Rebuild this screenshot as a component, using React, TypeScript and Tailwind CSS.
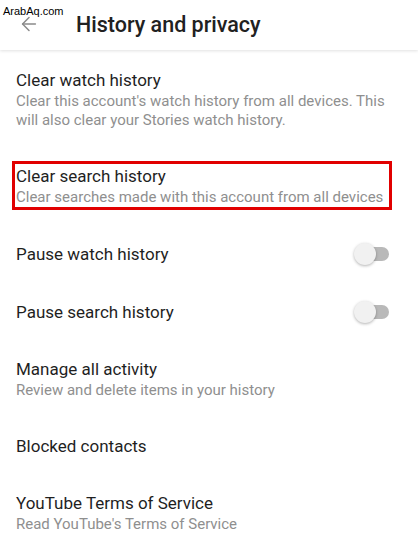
import { ArrowLeft } from "lucide-react";

type Item = {
  title: string;
  sub?: string;
  toggle?: boolean;
  boxed?: boolean;
};

const ITEMS: Item[] = [
  {
    title: "Clear watch history",
    sub: "Clear this account's watch history from all devices. This will also clear your Stories watch history.",
  },
  {
    title: "Clear search history",
    sub: "Clear searches made with this account from all devices",
    boxed: true,
  },
  { title: "Pause watch history", toggle: true },
  { title: "Pause search history", toggle: true },
  { title: "Manage all activity", sub: "Review and delete items in your history" },
  { title: "Blocked contacts" },
  { title: "YouTube Terms of Service", sub: "Read YouTube's Terms of Service" },
];

function Toggle() {
  return (
    <div className="relative mr-[9px] h-[22px] w-[35px] shrink-0">
      <div className="absolute right-0 top-1 h-[14px] w-[26px] rounded-full bg-[#b9b9b9]" />
      <div className="absolute left-0 top-0 size-[22px] rounded-full bg-[#f1f1f1] shadow-[0_1px_3px_rgba(0,0,0,0.3)]" />
    </div>
  );
}

export default function App() {
  return (
    <div
      className="relative h-[548px] w-[418px] overflow-hidden bg-white"
      style={{ fontFamily: "Roboto, 'Noto Sans', sans-serif" }}
    >
      <span
        className="absolute left-[3px] top-[4px] z-10 text-[11px] leading-[14px] text-black"
        style={{ fontFamily: "'Liberation Sans', Arial, sans-serif" }}
      >
        ArabAq.com
      </span>

      <header className="flex h-[50px] items-center shadow-[0_1px_3px_rgba(0,0,0,0.12)]">
        <ArrowLeft className="ml-[18px] mt-[-2px] size-[22px] text-[#8a8a8a]" strokeWidth={1.6} />
        <h1 className="ml-9 mt-[-1px] text-[21.5px] font-medium leading-7 text-[#212121]">
          History and privacy
        </h1>
      </header>

      <ul className="pt-[2px]">
        {ITEMS.map((it) => (
          <li
            key={it.title}
            className="relative flex items-center justify-between py-[18px] pl-4 pr-5"
          >
            <div className="flex flex-col gap-[1px]">
              <span className="text-[17px] leading-[21px] text-[#1f1f1f]">{it.title}</span>
              {it.sub && (
                <span className="text-[15px] leading-[19px] text-[#8f8f8f]">{it.sub}</span>
              )}
            </div>
            {it.toggle && <Toggle />}
            {it.boxed && (
              <div className="absolute bottom-[15px] left-3 right-[26px] top-[13px] border-[3px] border-[#e10000]" />
            )}
          </li>
        ))}
      </ul>
    </div>
  );
}
